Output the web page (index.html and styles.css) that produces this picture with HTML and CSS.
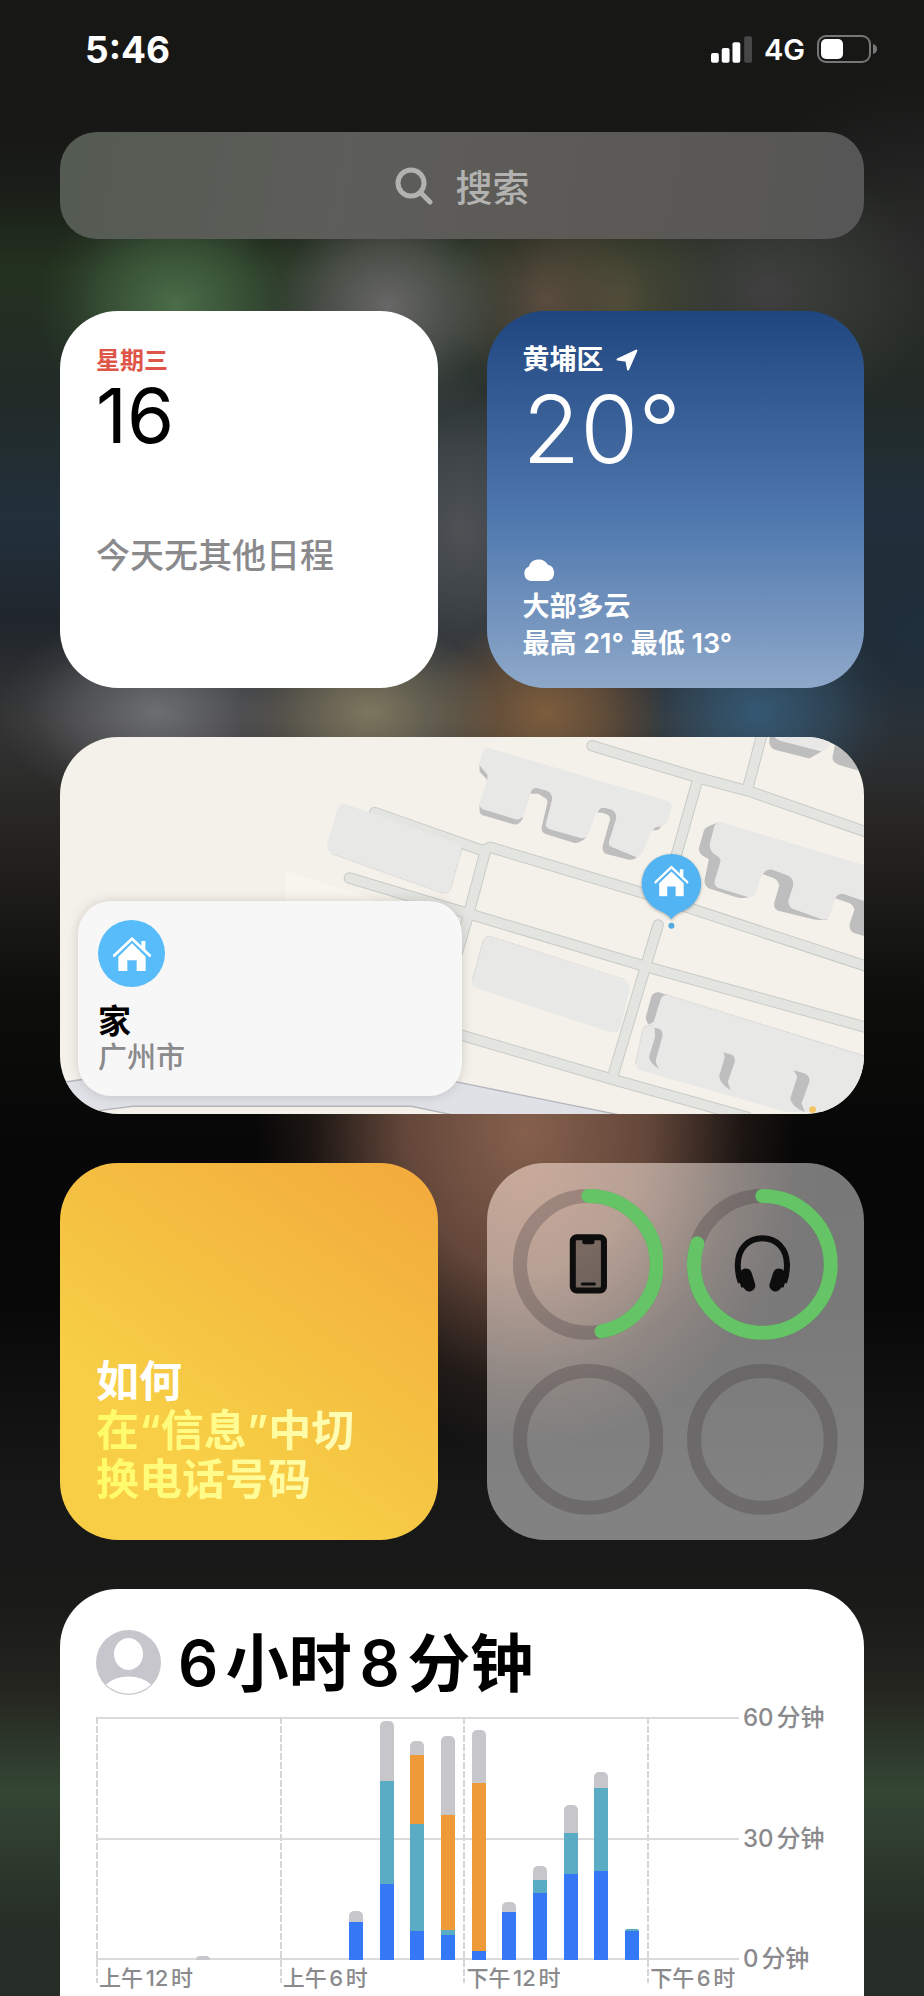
FILE: index.html
```html
<!DOCTYPE html>
<html lang="zh-CN">

<head>
    <meta charset="UTF-8">
    <meta name="viewport" content="width=device-width, initial-scale=1.0">
    <title>今天</title>
    <link rel="stylesheet" href="styles.css">
</head>

<body>
    <!-- shared icons -->
    <svg class="defs" width="0" height="0" aria-hidden="true">
        <symbol id="house" viewBox="0 0 114 102">
            <path d="M3 56 57 5l54 51" fill="none" stroke="#fff" stroke-width="8" stroke-linecap="round" />
            <path d="M85 12h12v30L85 31zM16 59l41-40 41 40v43H71V70H43v32H16z" fill="#fff" />
        </symbol>
    </svg>

    <header class="status">
        <time class="clock">5:46</time>
        <div class="status-right">
            <svg class="signal" viewBox="0 0 42 27" aria-hidden="true">
                <rect x="0" y="17" width="8" height="10" rx="2" />
                <rect x="11" y="12" width="8" height="15" rx="2" />
                <rect x="22" y="6" width="8" height="21" rx="2" />
                <rect class="off" x="34" y="0" width="8" height="27" rx="2" />
            </svg>
            <span class="network">4G</span>
            <svg class="battery" viewBox="0 0 60 28" aria-hidden="true">
                <rect class="shell" x="1" y="1" width="52" height="26" rx="8" />
                <rect x="4" y="4" width="22" height="20" rx="5" />
                <path class="nub" d="M56 9q4 1 4 5t-4 5z" />
            </svg>
        </div>
    </header>

    <main class="today">
        <button type="button" class="search">
            <svg class="search-icon" viewBox="0 0 38 38" aria-hidden="true">
                <circle cx="16" cy="16" r="13" />
                <path d="M25.500 25.500l9.500 9.500" />
            </svg>
            <span>搜索</span>
        </button>

        <section class="card calendar">
            <p class="weekday">星期三</p>
            <p class="day">16</p>
            <p class="events">今天无其他日程</p>
        </section>

        <section class="card weather">
            <p class="city">黄埔区
                <svg class="arrow" viewBox="0 0 20 20" aria-hidden="true">
                    <path d="M18.500 1.500 1.500 9.500 9.500 10.500l1.500 8z" />
                </svg>
            </p>
            <p class="temp">20°</p>
            <svg class="cloud" viewBox="0 0 34 24" aria-hidden="true">
                <path d="M8 22a6.500 6.500 0 0 1-1.500-12.500A9.500 9.500 0 0 1 24 7.500 7.500 7.500 0 0 1 25 22z" />
            </svg>
            <p class="sky">大部多云</p>
            <p class="sky">最高 21° 最低 13°</p>
        </section>

        <section class="card map wide">
            <svg class="map-art" viewBox="-1137 51 2409 1131" preserveAspectRatio="xMaxYMid slice" aria-hidden="true">
                <rect x="-1140" y="45" width="2420" height="1145" fill="#f4f1ea" />
                <path d="M-461 453-200 535V800H-461z" fill="#f8f5ed" />
                <!-- main road -->
                <path d="M-1140 1088-1070 1078-600 1040-60 1062 50 1085 540 1184H40L-85 1158H-920L-1025 1172-1140 1190z" fill="#e0e1e6" stroke="#b4b5ba" stroke-width="4" />
                <!-- streets: outline first, fill on top -->
                <g class="street-edge">
                    <path d="M457 78 770 172 930 215 1290 340" />
                    <path d="M970 30 925 200" />
                    <path d="M775 175 700 440" />
                    <path d="M-194 278 130 392 152 382 620 522 1290 742" />
                    <path d="M138 392 88 580 20 810 10 950" />
                    <path d="M-270 474 90 582 620 740 1290 925" />
                    <path d="M655 615 518 1072" />
                    <path d="M20 932 520 1078 920 1190" />
                </g>
                <g class="street-fill">
                    <path d="M457 78 770 172 930 215 1290 340" />
                    <path d="M970 30 925 200" />
                    <path d="M775 175 700 440" />
                    <path d="M-194 278 130 392 152 382 620 522 1290 742" />
                    <path d="M138 392 88 580 20 810 10 950" />
                    <path d="M-270 474 90 582 620 740 1290 925" />
                    <path d="M655 615 518 1072" />
                    <path d="M20 932 520 1078 920 1190" />
                </g>
                <!-- building walls -->
                <g class="wall">
                    <path d="M120 130 145 165V182L120 155zM120 255V275Q122 285 135 288L225 314Q238 316 250 295L240 260z" />
                    <path d="M272 222Q274 204 290 204L322 212Q340 220 338 240L318 318 443 350Q420 372 405 369L320 343Q305 338 306 322L323 250Q325 238 315 234L296 222Z" />
                    <path d="M473 278Q478 262 495 264L515 268Q532 278 530 295L508 375 592 412Q580 422 565 419L500 402Q486 395 489 378L511 300Q512 290 504 285L488 279z" />
                    <path d="M638 332Q645 318 665 319L655 330z" />
                    <path d="M840 306 808 318Q792 324 790 340L777 386Q778 402 790 408L807 418 794 482Q794 498 808 506L885 530Q910 538 930 530L850 400z" />
                    <path d="M968 462Q980 446 995 448L1045 467Q1064 478 1060 498L1045 548 1165 598Q1140 602 1120 598L1015 572Q1000 565 1003 548L1018 498Q1016 480 1000 474z" />
                    <path d="M1184 534Q1195 520 1210 521L1280 545V650L1240 638Q1227 630 1229 612L1243 570Q1242 555 1225 548z" />
                    <path d="M990 45 988 70Q992 86 1005 90L1108 116 1145 95 1100 60z" />
                    <path d="M1186 70 1178 110Q1175 128 1200 136L1280 160V60z" />
                    <path d="M680 824 660 817Q640 815 634 832L618 892Q620 908 630 914L645 930 680 900z" />
                </g>
                <!-- roofs -->
                <g class="roof">
                    <path d="M145 84Q132 80 128 100L120 130Q120 140 128 146L144 165V180L120 250Q120 266 135 270L228 298Q246 302 254 282L272 222Q276 204 290 204L322 212Q340 220 338 240L320 308Q318 324 330 328L415 352Q436 358 443 350L473 270Q480 260 495 264L515 268Q532 278 530 295L508 365Q506 378 518 382L592 412Q604 410 612 392L638 326Q645 318 660 319 680 318 686 298L695 265Q697 248 680 242z" />
                    <path d="M840 306Q826 308 822 325L810 372Q808 388 822 402 844 412 842 425L824 485Q824 500 836 504L925 532Q942 535 948 515L968 460Q976 446 995 448L1045 467Q1064 478 1060 498L1046 540Q1044 560 1058 566L1145 598Q1165 602 1172 580L1184 540Q1190 520 1210 521L1280 545V438z" />
                    <path d="M1000 40H1180L1165 85 1145 95 1020 63Q1004 60 1000 40z" />
                    <path d="M1190 40H1290V140L1240 110 1228 85 1190 70z" />
                    <path d="M-285 252Q-300 252-306 268L-336 370Q-340 392-322 402L10 520Q26 522 34 506L66 390Q70 376 55 370z" />
                    <path d="M155 650Q136 646 130 664L98 776Q94 796 108 803L515 937Q535 940 542 922L570 805Q572 790 555 782z" />
                    <path d="M690 828Q668 820 662 840L642 905 630 912Q612 914 608 930L588 1025Q586 1044 600 1050L1040 1175H1290V1010z" />
                </g>
                <g class="wall">
                    <path d="M645 922 662 928Q670 936 668 948L648 1020Q648 1032 658 1046 630 1030 628 1010L646 950z" />
                    <path d="M850 996 876 1004Q888 1012 884 1028L864 1085 872 1110Q840 1090 838 1068L855 1010z" />
                    <path d="M1062 1050 1095 1060Q1112 1070 1108 1085L1085 1150 1095 1176Q1055 1160 1051 1135L1072 1070z" />
                </g>
                <path d="M-322 402 10 520Q26 522 34 506L68 386M98 780 130 664Q136 646 155 650L560 780M588 1030 608 930Q614 914 636 916M680 824 1280 1010" fill="none" stroke="#b5b5b5" stroke-width="2" stroke-dasharray="3 4" />
                <circle cx="1118" cy="1168" r="10" fill="#f2c463" />
                <!-- home pin -->
                <path class="pin" d="M695 402a89 89 0 0 1 32 172q-20 8-32 24-12-16-32-24a89 89 0 0 1 32-172z" />
                <use href="#house" x="644" y="436" width="102" height="94" />
                <circle cx="695" cy="617" r="9" fill="#54a9e3" />
            </svg>
            <div class="place">
                <span class="place-icon"><svg aria-hidden="true"><use href="#house" /></svg></span>
                <p class="place-name">家</p>
                <p class="place-city">广州市</p>
            </div>
        </section>

        <section class="card tips">
            <p class="tips-lead">如何</p>
            <p class="tips-text">在“信息”中切换电话号码</p>
        </section>

        <section class="card batteries">
            <svg class="ring" viewBox="0 0 150 150" role="img" aria-label="iPhone">
                <circle class="track" cx="75" cy="75" r="68" />
                <path class="level" pathLength="100" stroke-dasharray="46.9 100" d="M75 7a68 68 0 0 1 0 136a68 68 0 0 1 0-136" />
                <rect x="59.500" y="48" width="31" height="53" rx="4" fill="#000" fill-opacity=".35" stroke="#0d0d0d" stroke-width="6" />
                <path d="M69 49h12v4q0 2-2 2h-8q-2 0-2-2z" fill="#0d0d0d" />
                <path d="M69 94.500h12" stroke="#0d0d0d" stroke-width="3" stroke-linecap="round" />
            </svg>
            <svg class="ring" viewBox="0 0 150 150" role="img" aria-label="耳机">
                <circle class="track" cx="75" cy="75" r="68" />
                <path class="level" pathLength="100" stroke-dasharray="80 100" d="M75 7a68 68 0 0 1 0 136a68 68 0 0 1 0-136" />
                <path d="M53.500 93Q50.500 85 50.500 75C51 59 61 49 75 49s24 10 24.500 26Q99.500 85 96.500 93" fill="none" stroke="#0d0d0d" stroke-width="6" />
                <path d="M50 85 54 98h6l-6-16zM100 85 96 98h-6l6-16z" fill="#0d0d0d" />
                <path d="M58.500 85 62 96M91.500 85 88 96" stroke="#0d0d0d" stroke-width="12" stroke-linecap="round" />
            </svg>
            <svg class="ring" viewBox="0 0 150 150" aria-hidden="true">
                <circle class="track" cx="75" cy="75" r="68" />
            </svg>
            <svg class="ring" viewBox="0 0 150 150" aria-hidden="true">
                <circle class="track" cx="75" cy="75" r="68" />
            </svg>
        </section>

        <section class="card usage wide">
            <div class="usage-head">
                <svg class="avatar" viewBox="0 0 65 65" aria-hidden="true">
                    <circle cx="32.500" cy="32.500" r="32.500" fill="#c7c6cc" />
                    <ellipse cx="32.500" cy="24" rx="14.500" ry="16" fill="#fff" />
                    <path d="M10 54.500q9-8 22.500-8t22.500 8a32 32 0 0 1-45 0z" fill="#fff" />
                </svg>
                <h1><span class="num">6</span>小时<span class="num mid">8</span>分钟</h1>
            </div>
            <div class="chart">
                <div class="plot">
                    <div class="ticks"><i></i><i></i><i></i><i></i></div>
                    <div class="bars">
                        <div class="bar"></div>
                        <div class="bar"></div>
                        <div class="bar"></div>
                        <div class="bar"><i class="gray" style="height: 1.7%"></i></div>
                        <div class="bar"></div>
                        <div class="bar"></div>
                        <div class="bar"></div>
                        <div class="bar"></div>
                        <div class="bar"><i class="gray" style="height: 4.4%"></i><i class="blue" style="height: 15.6%"></i></div>
                        <div class="bar"><i class="gray" style="height: 24.6%"></i><i class="teal" style="height: 42.6%"></i><i class="blue" style="height: 31.1%"></i></div>
                        <div class="bar"><i class="gray" style="height: 5.8%"></i><i class="orange" style="height: 28.1%"></i><i class="teal" style="height: 44.3%"></i><i class="blue" style="height: 11.8%"></i></div>
                        <div class="bar"><i class="gray" style="height: 32.5%"></i><i class="orange" style="height: 47.4%"></i><i class="teal" style="height: 2.2%"></i><i class="blue" style="height: 10.2%"></i></div>
                        <div class="bar"><i class="gray" style="height: 22%"></i><i class="orange" style="height: 69.2%"></i><i class="blue" style="height: 3.6%"></i></div>
                        <div class="bar"><i class="gray" style="height: 4.1%"></i><i class="blue" style="height: 19.8%"></i></div>
                        <div class="bar"><i class="gray" style="height: 5.4%"></i><i class="teal" style="height: 5.7%"></i><i class="blue" style="height: 27.4%"></i></div>
                        <div class="bar"><i class="gray" style="height: 11.6%"></i><i class="teal" style="height: 17%"></i><i class="blue" style="height: 35.4%"></i></div>
                        <div class="bar"><i class="gray" style="height: 6.5%"></i><i class="teal" style="height: 34.2%"></i><i class="blue" style="height: 36.7%"></i></div>
                        <div class="bar"><i class="teal" style="height: 0.8%"></i><i class="blue" style="height: 11.8%"></i></div>
                    </div>
                    <div class="hours">
                        <span>上午<span class="num mid">12</span>时</span>
                        <span>上午<span class="num mid">6</span>时</span>
                        <span>下午<span class="num mid">12</span>时</span>
                        <span>下午<span class="num mid">6</span>时</span>
                    </div>
                </div>
                <div class="minutes">
                    <span><span class="num">60</span>分钟</span>
                    <span><span class="num">30</span>分钟</span>
                    <span><span class="num">0</span>分钟</span>
                </div>
            </div>
        </section>
    </main>
</body>

</html>
```
FILE: styles.css
```css
* {
    box-sizing: border-box;
}

body {
    margin: 0;
    min-height: 100vh;
    display: flex;
    flex-direction: column;
    font-family: Inter, "Noto Sans CJK SC", sans-serif;
    font-weight: 500;
    color: #fff;
    /* blurred home screen behind the widgets */
    background:
        radial-gradient(ellipse 140px 120px at 19% 305px, #4a6d48, rgba(74, 109, 72, 0.5) 50%, rgba(74, 109, 72, 0.12) 80%, transparent),
        radial-gradient(ellipse 140px 120px at 42% 305px, #686767, rgba(104, 103, 103, 0.5) 50%, rgba(104, 103, 103, 0.12) 80%, transparent),
        radial-gradient(ellipse 100px 110px at 59% 300px, rgba(96, 78, 66, 0.9), rgba(96, 78, 66, 0.4) 50%, transparent),
        radial-gradient(ellipse 100px 110px at 67% 300px, rgba(82, 79, 58, 0.9), rgba(82, 79, 58, 0.4) 50%, transparent),
        radial-gradient(ellipse 170px 130px at 83% 290px, #404040, rgba(64, 64, 64, 0.5) 50%, transparent),
        radial-gradient(ellipse 160px 100px at 17% 712px, #6d6e72, rgba(109, 110, 114, 0.5) 50%, rgba(109, 110, 114, 0.12) 80%, transparent),
        radial-gradient(ellipse 130px 90px at 40% 712px, #7d765f, rgba(125, 118, 95, 0.6) 50%, transparent),
        radial-gradient(ellipse 120px 100px at 59% 712px, #7d5d3d, rgba(125, 93, 61, 0.6) 50%, transparent),
        radial-gradient(ellipse 140px 110px at 82% 712px, #345873, rgba(52, 88, 115, 0.5) 50%, rgba(52, 88, 115, 0.12) 80%, transparent),
        radial-gradient(ellipse 130px 170px at 50% 530px, #4e5154, rgba(78, 81, 84, 0.6) 50%, transparent),
        radial-gradient(ellipse 270px 320px at 57% 1130px, #86604d, rgba(130, 92, 75, 0.75) 45%, rgba(110, 78, 64, 0.2) 80%, transparent),
        radial-gradient(ellipse 200px 180px at 100% 250px, #292929, rgba(41, 41, 41, 0.5) 50%, transparent),
        radial-gradient(ellipse 300px 180px at 100% 630px, #1f2f3c, transparent),
        linear-gradient(#171716 120px, #191c18 180px, #23311f 270px, #222b28 400px, #22303c 520px, #20262c 620px, #343434 720px, #232220 850px, #0d0d0b 1000px, #070707 1150px, #080808 1300px, #171717 1480px, #1a1a19 1600px, #24251f 1690px, #344634 1790px, #262d26 1930px);
}

p,
h1 {
    margin: 0;
}

.defs {
    position: absolute;
}

/* status bar */
.status {
    display: flex;
    justify-content: space-between;
    align-items: center;
    height: 98px;
    padding: 0 47px 0 85px;
}

.clock {
    font-size: 37px;
    font-weight: 700;
}

.status-right {
    display: flex;
    align-items: center;
    gap: 12px;
    fill: #fff;
}

.signal {
    width: 41px;
    height: 27px;
}

.signal .off {
    fill: #474747;
}

.network {
    font-size: 29px;
    font-weight: 600;
}

.battery {
    width: 60px;
    height: 28px;
}

.battery .shell {
    fill: none;
    stroke: #777;
    stroke-width: 2;
}

.battery .nub {
    fill: #777;
}

/* widgets */
.today {
    flex: 1;
    display: grid;
    grid-template-columns: 1fr 1fr;
    grid-template-rows: auto auto auto auto 1fr;
    gap: 49px;
    padding: 34px 60px 0;
}

.search,
.wide {
    grid-column: 1 / -1;
}

.search {
    display: flex;
    justify-content: center;
    align-items: center;
    gap: 23px;
    height: 107px;
    margin-bottom: 23px;
    border: none;
    border-radius: 37px;
    background: linear-gradient(100deg, #545b52, #5d5d59 35%, #5c5a56 65%, #565656);
    color: #b2b2b0;
    font-family: inherit;
    font-size: 37px;
    font-weight: 500;
}

.search-icon {
    width: 38px;
    height: 38px;
    fill: none;
    stroke: #b2b2b0;
    stroke-width: 5;
    stroke-linecap: round;
}

.card {
    min-height: 377px;
    border-radius: 58px;
    overflow: hidden;
}

.calendar {
    padding: 32px 36px;
    background: #fff;
}

.weekday {
    font-size: 24px;
    font-weight: 600;
    line-height: 36px;
    color: #de5547;
}

.day {
    font-size: 76px;
    font-weight: 400;
    line-height: 72px;
    color: #000;
}

.events {
    margin-top: 85px;
    font-size: 34px;
    line-height: 40px;
    color: #8a8a8d;
}

.weather {
    display: flex;
    flex-direction: column;
    padding: 30px 36px 26px;
    background: linear-gradient(#20467f, #4f78ae 55%, #8ea8c9);
    font-size: 27px;
}

.weather svg {
    fill: #fff;
    stroke: #fff;
    stroke-width: 2;
    stroke-linejoin: round;
}

.city {
    display: flex;
    align-items: center;
    gap: 12px;
    font-weight: 600;
    line-height: 38px;
}

.arrow {
    width: 22px;
    height: 22px;
}

.temp {
    font-size: 94px;
    font-weight: 300;
    line-height: 100px;
}

.cloud {
    width: 34px;
    height: 24px;
    margin-top: auto;
    margin-bottom: 6px;
}

.sky {
    line-height: 37px;
    font-weight: 600;
}

.map {
    position: relative;
    display: flex;
    align-items: flex-end;
    padding: 18px;
}

.map-art {
    position: absolute;
    top: 0;
    left: 0;
    width: 100%;
    height: 100%;
}

.street-edge,
.street-fill {
    fill: none;
    stroke: #c9cbc7;
    stroke-width: 34;
    stroke-linecap: round;
    stroke-linejoin: round;
}

.street-fill {
    stroke: #e4e5e0;
    stroke-width: 28;
}

.wall {
    fill: #bfbebe;
}

.roof {
    fill: #e8e8e7;
}

.pin {
    fill: #52b4f3;
    filter: drop-shadow(0 3px 5px rgba(0, 0, 0, 0.3));
}

.place {
    position: relative;
    width: 50%;
    padding: 19px 20px;
    border-radius: 33px;
    background: #f7f7f7;
    box-shadow: 0 0 12px rgba(0, 0, 0, 0.15);
}

.place-icon {
    display: flex;
    justify-content: center;
    align-items: center;
    width: 67px;
    height: 67px;
    margin-bottom: 16px;
    border-radius: 50%;
    background: #58bbfa;
}

.place-icon svg {
    width: 38px;
    height: 34px;
}

.place-name {
    font-size: 33px;
    font-weight: 600;
    line-height: 36px;
    color: #000;
}

.place-city {
    font-size: 29px;
    line-height: 38px;
    color: #8a8a8d;
}

.tips {
    display: flex;
    flex-direction: column;
    justify-content: flex-end;
    align-items: flex-start;
    padding: 36px 60px 36px 36px;
    background: linear-gradient(35deg, #f7ce45 30%, #f2a93c);
    font-size: 43px;
    font-weight: 600;
    line-height: 49px;
}

.tips-text {
    background: linear-gradient(90deg, #fffb66, #fffcc0);
    -webkit-background-clip: text;
    background-clip: text;
    color: transparent;
}

.batteries {
    display: grid;
    grid-template-columns: 1fr 1fr;
    gap: 24px;
    padding: 26px 26px 25px;
    background:
        radial-gradient(ellipse 290px 260px at 10% 5%, rgba(235, 180, 150, 0.3), transparent),
        rgba(255, 255, 255, 0.46);
}

.ring {
    width: 100%;
}

.track,
.level {
    fill: none;
    stroke: rgba(60, 50, 55, 0.28);
    stroke-width: 14;
}

.level {
    stroke: #65c466;
    stroke-linecap: round;
}

.usage {
    padding: 41px 36px 0;
    border-radius: 58px 58px 0 0;
    background: #fff;
    color: #000;
}

.usage-head {
    display: flex;
    align-items: center;
    gap: 17px;
    height: 65px;
}

.avatar {
    width: 65px;
    height: 65px;
}

h1 {
    font-size: 63px;
    font-weight: 600;
    line-height: 64px;
}

.num {
    margin-right: 0.12em;
}

.num.mid {
    margin-left: 0.12em;
}

/* screen time chart, one column per hour */
.chart {
    display: flex;
    align-items: flex-start;
    gap: 4px;
    margin-top: 22px;
    color: #8a8a8d;
}

.plot {
    position: relative;
    flex: 1;
}

.bars {
    display: grid;
    grid-template-columns: repeat(21, 1fr);
    height: 243px;
    background:
        linear-gradient(#dadadc, #dadadc) 0 0 / 100% 2px no-repeat,
        linear-gradient(#dadadc, #dadadc) 0 50% / 100% 2px no-repeat,
        linear-gradient(#dadadc, #dadadc) 0 100% / 100% 2px no-repeat;
}

.bar {
    display: flex;
    flex-direction: column;
    justify-content: flex-end;
    align-items: center;
    position: relative;
}

.bar i {
    width: 14px;
}

.bar i:first-child {
    border-radius: 5px 5px 0 0;
}

.gray {
    background: #c7c6cb;
}

.orange {
    background: #ef9a38;
}

.teal {
    background: #5aacc4;
}

.blue {
    background: #3478f6;
}

.ticks,
.hours {
    display: grid;
    grid-template-columns: 6fr 6fr 6fr 3fr;
}

.ticks {
    position: absolute;
    top: 0;
    left: 0;
    width: 100%;
    height: 266px;
}

.ticks i {
    background: repeating-linear-gradient(#d6d6d8 0 7px, transparent 7px 9px) 0 0 / 2px 100% no-repeat;
}

.hours {
    padding-top: 5px;
    font-size: 22px;
    line-height: 26px;
    white-space: nowrap;
}

.hours > span {
    min-width: 0;
    padding-left: 3px;
}

.minutes {
    display: flex;
    flex-direction: column;
    justify-content: space-between;
    width: 85px;
    height: 267px;
    margin-top: -12px;
    font-size: 24px;
    line-height: 26px;
    white-space: nowrap;
}
```
